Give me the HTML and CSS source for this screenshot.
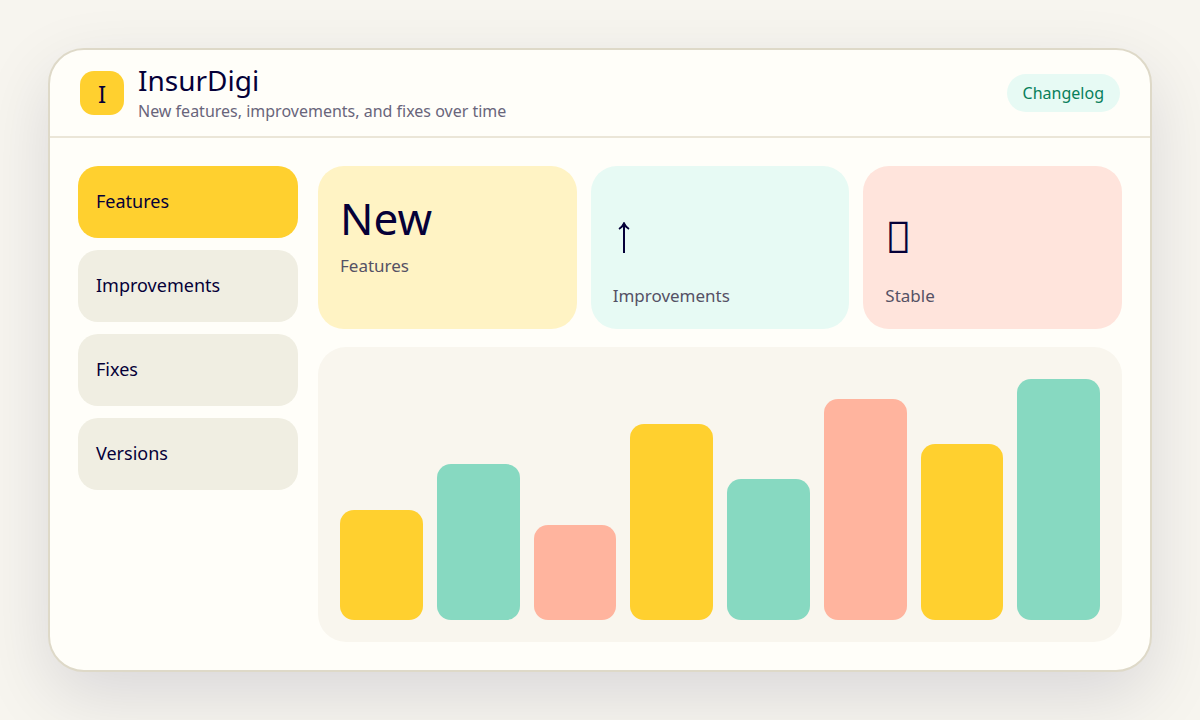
FILE: index.html
```
<!DOCTYPE html>
<html lang="en">
<head>
  <meta charset="UTF-8">
  <meta name="viewport" content="width=device-width, initial-scale=1.0">
  <title>InsurDigi Changelog</title>
  <link rel="stylesheet" href="styles.css">
</head>
<body>
  <div class="window">
    <header class="header">
      <div class="logo">I</div>
      <div class="brand">
        <h1>InsurDigi</h1>
        <p>New features, improvements, and fixes over time</p>
      </div>
      <span class="badge">Changelog</span>
    </header>

    <div class="content">
      <nav class="sidebar">
        <a class="nav-item active" href="#features">Features</a>
        <a class="nav-item" href="#improvements">Improvements</a>
        <a class="nav-item" href="#fixes">Fixes</a>
        <a class="nav-item" href="#versions">Versions</a>
      </nav>

      <main class="main">
        <div class="stats">
          <div class="stat yellow">
            <div class="value">New</div>
            <div class="label">Features</div>
          </div>
          <div class="stat mint">
            <div class="value symbol">
              <svg width="22" height="31" viewBox="0 0 22 31" role="img" aria-label="Up">
                <path d="M11 31V2M6 7Q9.500 5 11 1.500Q12.500 5 16 7" fill="none" stroke="currentColor" stroke-width="2"/>
              </svg>
            </div>
            <div class="label">Improvements</div>
          </div>
          <div class="stat coral">
            <div class="value symbol">&#xE000;</div>
            <div class="label">Stable</div>
          </div>
        </div>

        <div class="chart">
          <div class="bar" style="height: 44%"></div>
          <div class="bar" style="height: 62%"></div>
          <div class="bar" style="height: 38%"></div>
          <div class="bar" style="height: 78%"></div>
          <div class="bar" style="height: 56%"></div>
          <div class="bar" style="height: 88%"></div>
          <div class="bar" style="height: 70%"></div>
          <div class="bar" style="height: 96%"></div>
        </div>
      </main>
    </div>
  </div>
</body>
</html>
```
FILE: styles.css
```
* {
  box-sizing: border-box;
}

body {
  margin: 0;
  min-height: 100vh;
  padding: 48px;
  display: flex;
  background: #f7f5ef;
  color: #050038;
  font-family: "Noto Sans", sans-serif;
}

.window {
  flex: 1;
  display: flex;
  flex-direction: column;
  background: #fffef9;
  border: 2px solid #ded9c8;
  border-radius: 36px;
  box-shadow: 0 24px 70px rgba(5, 0, 56, 0.12);
  overflow: hidden;
}

.header {
  display: flex;
  align-items: center;
  gap: 14px;
  height: 88px;
  padding: 0 30px;
  border-bottom: 2px solid #ebe6d8;
}

.logo {
  width: 44px;
  height: 44px;
  display: flex;
  align-items: center;
  justify-content: center;
  border-radius: 14px;
  background: #ffd02f;
  font-size: 24px;
}

.brand {
  flex: 1;
}

.brand h1 {
  margin: 0;
  font-size: 28px;
  font-weight: 400;
  line-height: 36px;
}

.brand p {
  margin: 0;
  font-size: 16px;
  line-height: 26px;
  color: #69657b;
}

.badge {
  padding: 8px 16px;
  border-radius: 20px;
  background: #e7faf4;
  color: #087f5b;
  font-size: 16px;
}

.content {
  flex: 1;
  display: grid;
  grid-template-columns: 220px 1fr;
  gap: 20px;
  padding: 28px;
}

.sidebar {
  display: flex;
  flex-direction: column;
  gap: 12px;
}

.nav-item {
  height: 72px;
  display: flex;
  align-items: center;
  padding: 0 18px 2px;
  border-radius: 20px;
  background: #f0eee2;
  color: #050038;
  font-size: 18px;
  text-decoration: none;
}

.nav-item.active {
  background: #ffd02f;
}

.main {
  display: flex;
  flex-direction: column;
  gap: 18px;
}

.stats {
  display: grid;
  grid-template-columns: repeat(3, 1fr);
  gap: 14px;
}

.stat {
  padding: 22px;
  border-radius: 26px;
}

.stat.yellow {
  background: #fff3c4;
}

.stat.mint {
  background: #e7faf4;
}

.stat.coral {
  background: #ffe4dc;
}

.value {
  font-size: 44px;
  line-height: 60px;
}

.value.symbol {
  padding: 18px 0 12px;
}

.label {
  margin-top: 6px;
  font-size: 17px;
  color: #555165;
}

.chart {
  flex: 1;
  display: flex;
  align-items: flex-end;
  gap: 14px;
  padding: 22px;
  border-radius: 28px;
  background: #f9f6ee;
}

.bar {
  flex: 1;
  border-radius: 14px;
  background: #ffd02f;
}

.bar:nth-child(3n + 2) {
  background: #87d9c1;
}

.bar:nth-child(3n) {
  background: #ffb49e;
}
```
